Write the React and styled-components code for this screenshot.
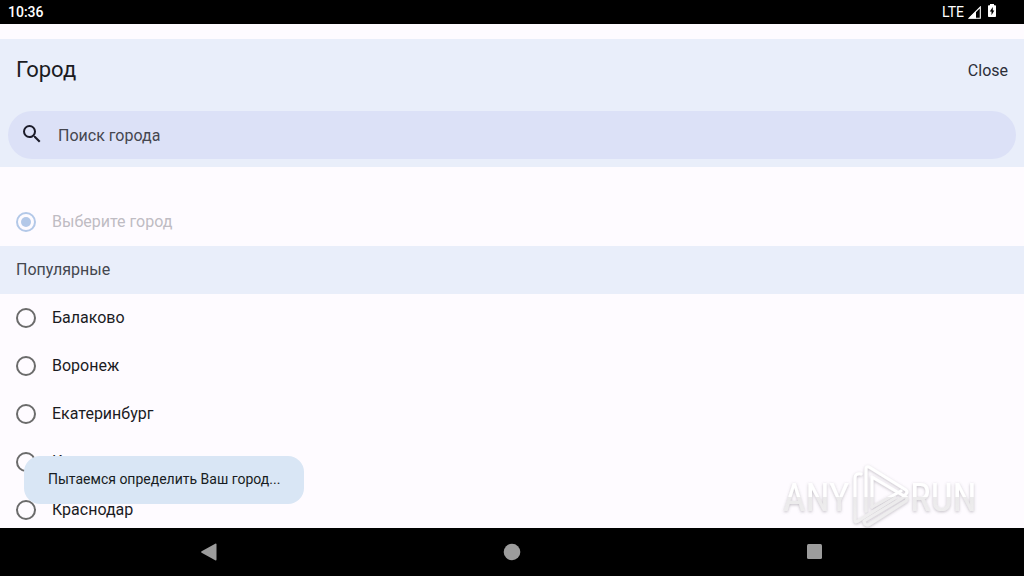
/* eslint-disable react/prop-types */
import { useState } from 'react';
import styled, { createGlobalStyle } from 'styled-components';

const GlobalStyle = createGlobalStyle`
	* {
		box-sizing: border-box;
	}

	body {
		margin: 0;
		background: #000;
		font-family: Roboto, 'Noto Sans', sans-serif;
	}

	button,
	input {
		font: inherit;
	}
`;

const Screen = styled.div`
	display: flex;
	flex-direction: column;
	height: 100vh;
	overflow: hidden;
`;

const StatusBar = styled.div`
	display: flex;
	flex: none;
	align-items: center;
	justify-content: space-between;
	height: 24px;
	padding: 0 25px 0 8px;
	background: #000;
	color: #fff;
	font-size: 14px;
	line-height: 24px;
`;

const Clock = styled.time`
	font-weight: 500;
`;

const StatusIcons = styled.div`
	display: flex;
	align-items: center;
	gap: 4px;
`;

const Content = styled.main`
	position: relative;
	flex: 1;
	min-height: 0;
	padding-top: 15px;
	overflow: hidden;
	background: #fefbff;
`;

const Header = styled.header`
	padding: 0 8px 8px;
	background: #e9eefa;
`;

const TitleRow = styled.div`
	display: flex;
	align-items: center;
	justify-content: space-between;
	height: 64px;
	margin-bottom: 8px;
	padding: 0 8px;
`;

const Title = styled.h1`
	margin: 0;
	padding-bottom: 2px;
	color: #1b1b1f;
	font-size: 22px;
	font-weight: 400;
	line-height: 28px;
`;

const CloseButton = styled.button`
	padding: 0;
	border: 0;
	background: none;
	color: #2c2e38;
	font-size: 16px;
	line-height: 24px;
	cursor: pointer;
`;

const SearchField = styled.label`
	display: flex;
	align-items: center;
	gap: 14px;
	height: 48px;
	padding: 0 12px;
	border-radius: 24px;
	background: #dce1f7;
`;

const SearchInput = styled.input`
	flex: 1;
	min-width: 0;
	padding: 2px 0 0;
	border: 0;
	outline: 0;
	background: none;
	color: #1b1b1f;
	font-size: 16px;
	line-height: 24px;

	&::placeholder {
		color: #45464f;
		opacity: 1;
	}
`;

const CityList = styled.form`
	padding-top: 31px;
`;

const SectionTitle = styled.h2`
	margin: 0;
	padding: 0 16px;
	background: #e9eefa;
	color: #44474f;
	font-size: 16px;
	font-weight: 400;
	line-height: 48px;
`;

const CityLabel = styled.label`
	display: flex;
	align-items: center;
	gap: 16px;
	height: 48px;
	padding: 0 16px;
	color: ${({ $disabled }) => ($disabled ? '#bfbcc3' : '#1b1b1f')};
	font-size: 16px;
	line-height: 48px;
`;

const Radio = styled.input`
	display: grid;
	flex: none;
	place-content: center;
	width: 20px;
	height: 20px;
	margin: 0;
	border: 2px solid #6b6b6b;
	border-radius: 50%;
	appearance: none;

	&:checked {
		border-color: #3b78c8;
	}

	&:checked::before {
		width: 10px;
		height: 10px;
		border-radius: 50%;
		background: #3b78c8;
		content: '';
	}

	&:disabled {
		border-color: #b3c8e8;
	}

	&:disabled::before {
		background: #b3c8e8;
	}
`;

const Toast = styled.div`
	position: absolute;
	bottom: 24px;
	left: 24px;
	padding: 0 24px 2px;
	border-radius: 16px;
	background: #d9e6f5;
	color: #171c22;
	font-size: 14px;
	line-height: 46px;
`;

const WatermarkBox = styled.div`
	position: absolute;
	right: 44px;
	bottom: 0;
	pointer-events: none;
`;

const NavBar = styled.nav`
	display: grid;
	flex: none;
	grid-template-columns: repeat(3, 1fr);
	justify-items: center;
	height: 48px;
	padding: 0 58px;
	background: #000;
`;

const NavButton = styled.button`
	display: flex;
	align-items: center;
	justify-content: center;
	width: 48px;
	padding: 0;
	border: 0;
	background: none;
	color: #9c9c9c;
	cursor: pointer;
`;

const SignalIcon = () => (
	<svg width="13" height="13" viewBox="0 0 13 13" aria-hidden="true">
		<path d="M12.3 1v11.3H1z" fill="none" stroke="#fff" strokeWidth="1.1" />
		<path d="M8 5.2V12.5H.8z" fill="#fff" />
	</svg>
);

const BatteryIcon = () => (
	<svg width="14" height="16" viewBox="0 0 14 16" aria-hidden="true">
		<path
			d="M5 0h4v1.3h1.2q.8 0 .8.8v10.1q0 .8-.8.8H3.8q-.8 0-.8-.8V2.1q0-.8.8-.8H5z"
			fill="#fff"
		/>
		<path d="M7.8 3L4.8 7.6h1.7v3.6L9.3 6.4H7.8z" fill="#000" />
	</svg>
);

const SearchIcon = () => (
	<svg width="24" height="24" viewBox="0 0 24 24" aria-hidden="true">
		<path
			transform="translate(0 -1)"
			d="M15.5 14h-.79l-.28-.27A6.47 6.47 0 0 0 16 9.5 6.5 6.5 0 1 0 9.5 16c1.61 0 3.09-.59 4.23-1.57l.27.28v.79l5 4.99L20.49 19l-4.99-5zm-6 0C7.01 14 5 11.99 5 9.5S7.01 5 9.5 5 14 7.01 14 9.5 11.99 14 9.5 14z"
			fill="#1b1b29"
		/>
	</svg>
);

const Watermark = () => (
	<WatermarkBox>
		<svg width="202" height="66" viewBox="0 0 202 66" display="block">
			<defs>
				<linearGradient
					id="shine"
					gradientUnits="userSpaceOnUse"
					x1="0"
					y1="0"
					x2="0"
					y2="66"
				>
					<stop offset="0.53" stopColor="#fff" />
					<stop offset="0.53" stopColor="#ebeaeb" />
					<stop offset="1" stopColor="#f1f0f1" />
				</linearGradient>
				<filter id="glow" x="-10%" y="-10%" width="120%" height="120%">
					<feDropShadow
						dx="0"
						dy="1"
						stdDeviation="1.6"
						floodColor="#77727a"
						floodOpacity="0.45"
					/>
				</filter>
			</defs>
			<g filter="url(#glow)">
				<g
					fill="url(#shine)"
					fontFamily="'Liberation Sans Narrow', 'Roboto Condensed', Roboto, sans-serif"
					fontSize="39"
				>
					<text x="5" y="49">
						ANY
					</text>
					<text x="132" y="49">
						RUN
					</text>
				</g>
				<g
					fill="none"
					stroke="url(#shine)"
					strokeWidth="3"
					strokeLinejoin="round"
					strokeLinecap="round"
				>
					<path d="M88 49V7q0-3 3-2l37 23q2 2 0 4l-2 2-32-19v30" />
					<path d="M83 12q-6-1-6 4v42q0 3 3 1l37-23" />
					<path d="M94 45l29-16" />
					<path d="M86 59l40-24q3-1 3 2l-1 2-36 23q-3 2-5 0z" />
				</g>
			</g>
		</svg>
	</WatermarkBox>
);

const City = ({ name, ...props }) => (
	<CityLabel $disabled={props.disabled}>
		<Radio type="radio" name="city" value={name} {...props} />
		{name}
	</CityLabel>
);

const popularCities = [
	'Балаково',
	'Воронеж',
	'Екатеринбург',
	'Казань',
	'Краснодар',
];

const App = () => {
	const [selected, setSelected] = useState('');
	const [search, setSearch] = useState('');

	return (
		<Screen>
			<GlobalStyle />
			<StatusBar>
				<Clock>10:36</Clock>
				<StatusIcons>
					<span>LTE</span>
					<SignalIcon />
					<BatteryIcon />
				</StatusIcons>
			</StatusBar>
			<Content>
				<Header>
					<TitleRow>
						<Title>Город</Title>
						<CloseButton type="button">Close</CloseButton>
					</TitleRow>
					<SearchField>
						<SearchIcon />
						<SearchInput
							type="text"
							aria-label="Поиск города"
							placeholder="Поиск города"
							value={search}
							onChange={({ target }) => setSearch(target.value)}
						/>
					</SearchField>
				</Header>
				<CityList>
					<City
						name="Выберите город"
						checked={selected === ''}
						disabled
						readOnly
					/>
					<SectionTitle>Популярные</SectionTitle>
					{popularCities.map((city) => (
						<City
							key={city}
							name={city}
							checked={selected === city}
							onChange={() => setSelected(city)}
						/>
					))}
				</CityList>
				<Toast role="status">Пытаемся определить Ваш город...</Toast>
				<Watermark />
			</Content>
			<NavBar>
				<NavButton type="button" aria-label="Назад">
					<svg width="18" height="18" viewBox="0 0 18 18">
						<path
							d="M15.2.8q1.3-.6 1.3.8v14.8q0 1.4-1.3.8L1.6 9.8q-1.2-.8 0-1.6z"
							fill="currentColor"
						/>
					</svg>
				</NavButton>
				<NavButton type="button" aria-label="Домой">
					<svg width="18" height="18" viewBox="0 0 18 18">
						<circle cx="9" cy="9" r="8.3" fill="currentColor" />
					</svg>
				</NavButton>
				<NavButton type="button" aria-label="Недавние">
					<svg width="16" height="16" viewBox="0 0 16 16">
						<rect width="15" height="15" rx="1.5" fill="currentColor" />
					</svg>
				</NavButton>
			</NavBar>
		</Screen>
	);
};

export default App;
